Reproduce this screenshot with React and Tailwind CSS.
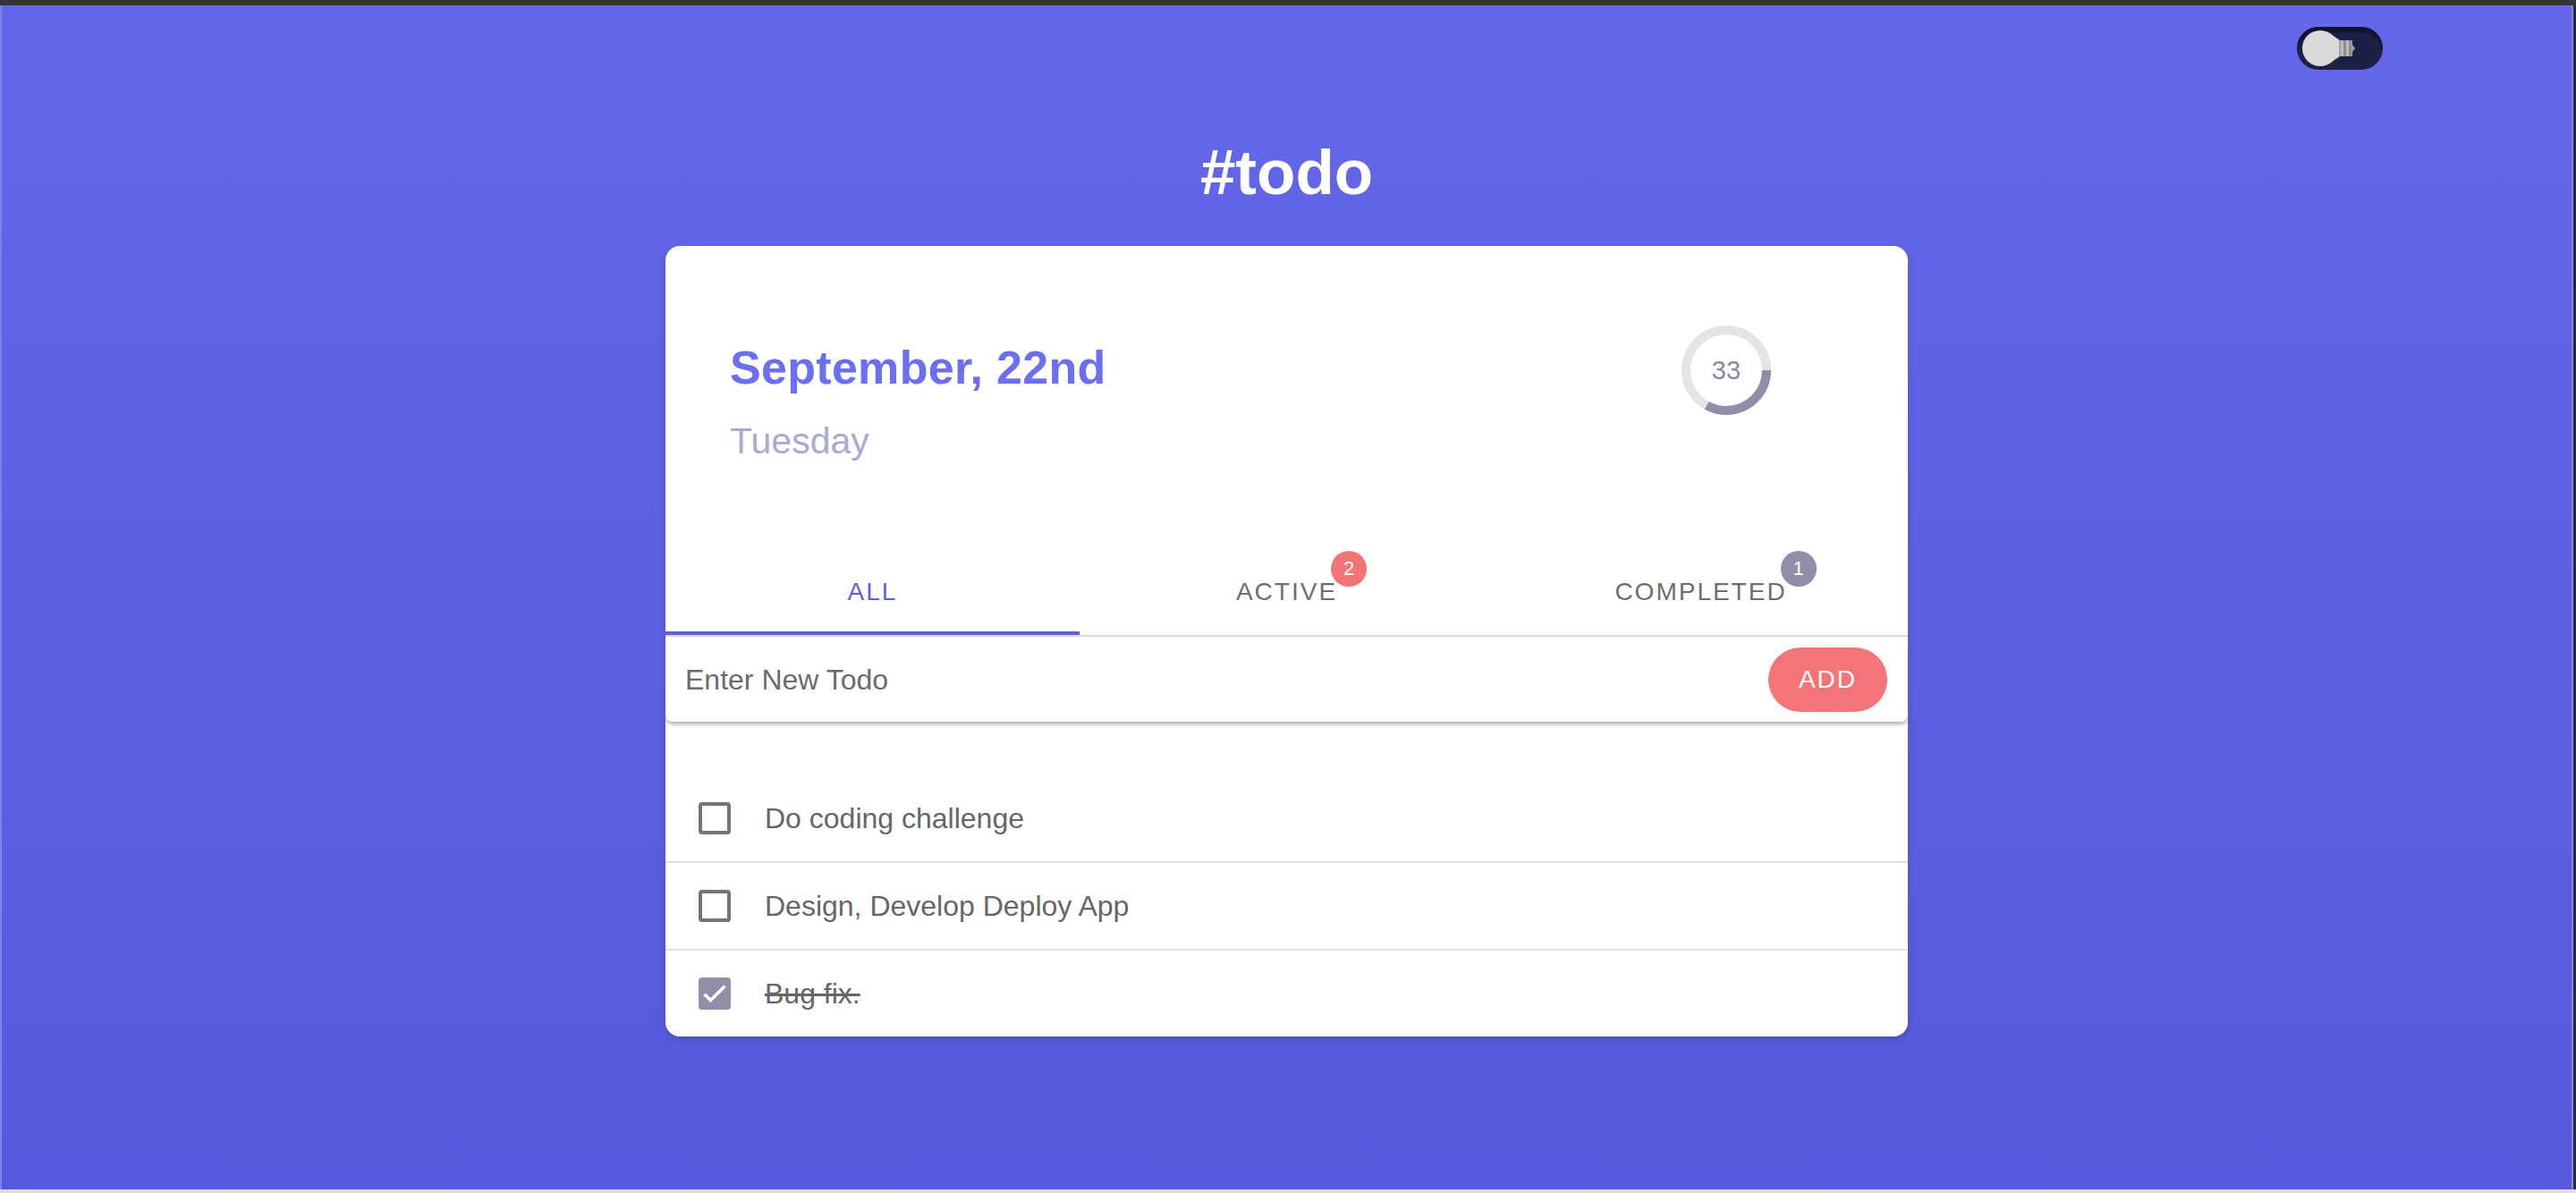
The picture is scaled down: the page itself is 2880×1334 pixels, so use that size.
// App.jsx
import React from 'react';

const todos = [
  { id: 1, text: 'Do coding challenge', done: false },
  { id: 2, text: 'Design, Develop Deploy App', done: false },
  { id: 3, text: 'Bug fix.', done: true },
];

const BulbToggle = () => (
  <div className="w-[96px] h-[48px] rounded-full bg-[#1c1f46] shadow-[inset_0_6px_2px_rgba(0,0,0,0.35)] overflow-hidden">
    <svg width="96" height="48" viewBox="0 0 96 48">
      {/* glass */}
      <circle cx="26" cy="24" r="20" fill="#d9d9d9" />
      <polygon points="36,7 48,15 48,33 36,41" fill="#d9d9d9" />
      {/* screw base */}
      <rect x="47" y="15" width="15" height="18" fill="#a3a3a3" />
      <rect x="49" y="15" width="3" height="18" fill="#bdbdbd" />
      <rect x="55" y="15" width="3" height="18" fill="#bdbdbd" />
      <rect x="52" y="15" width="3" height="18" fill="#8e8e8e" />
      <rect x="58" y="15" width="3" height="18" fill="#8e8e8e" />
      <polygon points="62,20 65,24 62,28" fill="#a3a3a3" />
    </svg>
  </div>
);

const Progress = ({ value }) => {
  const r = 45;
  const c = 2 * Math.PI * r;
  return (
    <div className="relative w-[100px] h-[100px] flex items-center justify-center">
      <svg width="100" height="100" viewBox="0 0 100 100" className="absolute inset-0">
        <circle cx="50" cy="50" r={r} fill="none" stroke="#e4e4e4" strokeWidth="10" />
        <circle
          cx="50"
          cy="50"
          r={r}
          fill="none"
          stroke="#918fa8"
          strokeWidth="10"
          strokeDasharray={`${(c * value) / 100} ${c}`}
        />
      </svg>
      <span className="relative text-[29px] leading-none text-[#8a88a5]">{value}</span>
    </div>
  );
};

const Tab = ({ label, active, badge, badgeColor }) => (
  <div className="flex-1 flex flex-col">
    <div className="flex-1 flex items-center justify-center pt-[4px]">
      <span
        className={`relative text-[28px] leading-none tracking-[2px] ${active ? 'text-[#5a5fe0]' : 'text-[#6e6e6e]'}`}
      >
        {label}
        {badge && (
          <span
            className={`absolute -right-[33px] -top-[32px] w-[40px] h-[40px] rounded-full flex items-center justify-center text-[22px] leading-none tracking-normal text-white ${badgeColor}`}
          >
            {badge}
          </span>
        )}
      </span>
    </div>
    <div className={`h-[4px] ${active ? 'bg-[#5a5fe0]' : ''}`} />
  </div>
);

const Checkbox = ({ checked }) =>
  checked ? (
    <div className="w-[36px] h-[36px] rounded-[4px] bg-[#918fa8] flex items-center justify-center">
      <svg width="34" height="34" viewBox="0 0 24 24">
        <path d="M4 12.5l4.8 4.8L20 6.2" fill="none" stroke="#fff" strokeWidth="2.6" />
      </svg>
    </div>
  ) : (
    <div className="w-[36px] h-[36px] rounded-[4px] border-[4px] border-[#757575]" />
  );

const App = () => {
  return (
    <div className="w-full h-[1334px] flex flex-col font-['Liberation_Sans',Arial,sans-serif]">
      <div className="h-[6px] bg-[#353535]" />
      <div className="flex-1 flex">
        <div className="w-[2px] bg-[#8082ec]" />
        <main className="flex-1 bg-linear-to-b from-[#6467e9] to-[#5659dd] flex flex-col">
          <div className="flex justify-end pt-[24px] pr-[211px]">
            <BulbToggle />
          </div>

          <h1 className="mt-[79px] text-center text-white font-bold text-[71px] leading-none">#todo</h1>

          <div className="mt-[47px] mx-auto w-[1389px] bg-white rounded-[16px] shadow-[0_4px_10px_rgba(0,0,0,0.15)] overflow-hidden">
            {/* header */}
            <div className="flex justify-between items-start pt-[89px] pl-[72px] pr-[153px] pb-[100px]">
              <div className="mt-[21px] flex flex-col">
                <div className="text-[52px] leading-none font-bold text-[#6a6ff5] tracking-[0.3px]">September, 22nd</div>
                <div className="mt-[36px] text-[41px] leading-none text-[#a8aad2]">Tuesday</div>
              </div>
              <Progress value={33} />
            </div>

            {/* tabs */}
            <div className="flex h-[96px]">
              <Tab label="ALL" active />
              <Tab label="ACTIVE" badge="2" badgeColor="bg-[#f27475]" />
              <Tab label="COMPLETED" badge="1" badgeColor="bg-[#918fa8]" />
            </div>
            <div className="h-[2px] bg-[#dcdcdc]" />

            {/* input */}
            <div className="relative z-10 h-[95px] flex items-center justify-between pl-[22px] pr-[23px] bg-white rounded-b-[8px] shadow-[0_3px_4px_rgba(0,0,0,0.3)]">
              <span className="text-[32px] leading-none text-[#6b6b6b]">Enter New Todo</span>
              <button className="w-[133px] h-[72px] rounded-full bg-[#f47577] text-white text-[28px] leading-none tracking-[2px] flex items-center justify-center">
                ADD
              </button>
            </div>

            {/* list */}
            <ul className="pt-[60px]">
              {todos.map((t, i) => (
                <li
                  key={t.id}
                  className={`h-[96px] flex items-center pl-[37px] gap-[38px] ${i > 0 ? 'border-t-2 border-[#e0e0e0] box-content' : ''}`}
                >
                  <Checkbox checked={t.done} />
                  <span className={`text-[32px] leading-none text-[#666666] ${t.done ? 'line-through' : ''}`}>
                    {t.text}
                  </span>
                </li>
              ))}
            </ul>
          </div>
        </main>
        <div className="w-[2px] bg-[#8486e8]" />
        <div className="w-[3px] bg-[#2b2b2b]" />
      </div>
      <div className="h-[4px] bg-[#dedede]" />
    </div>
  );
};

export default App;
